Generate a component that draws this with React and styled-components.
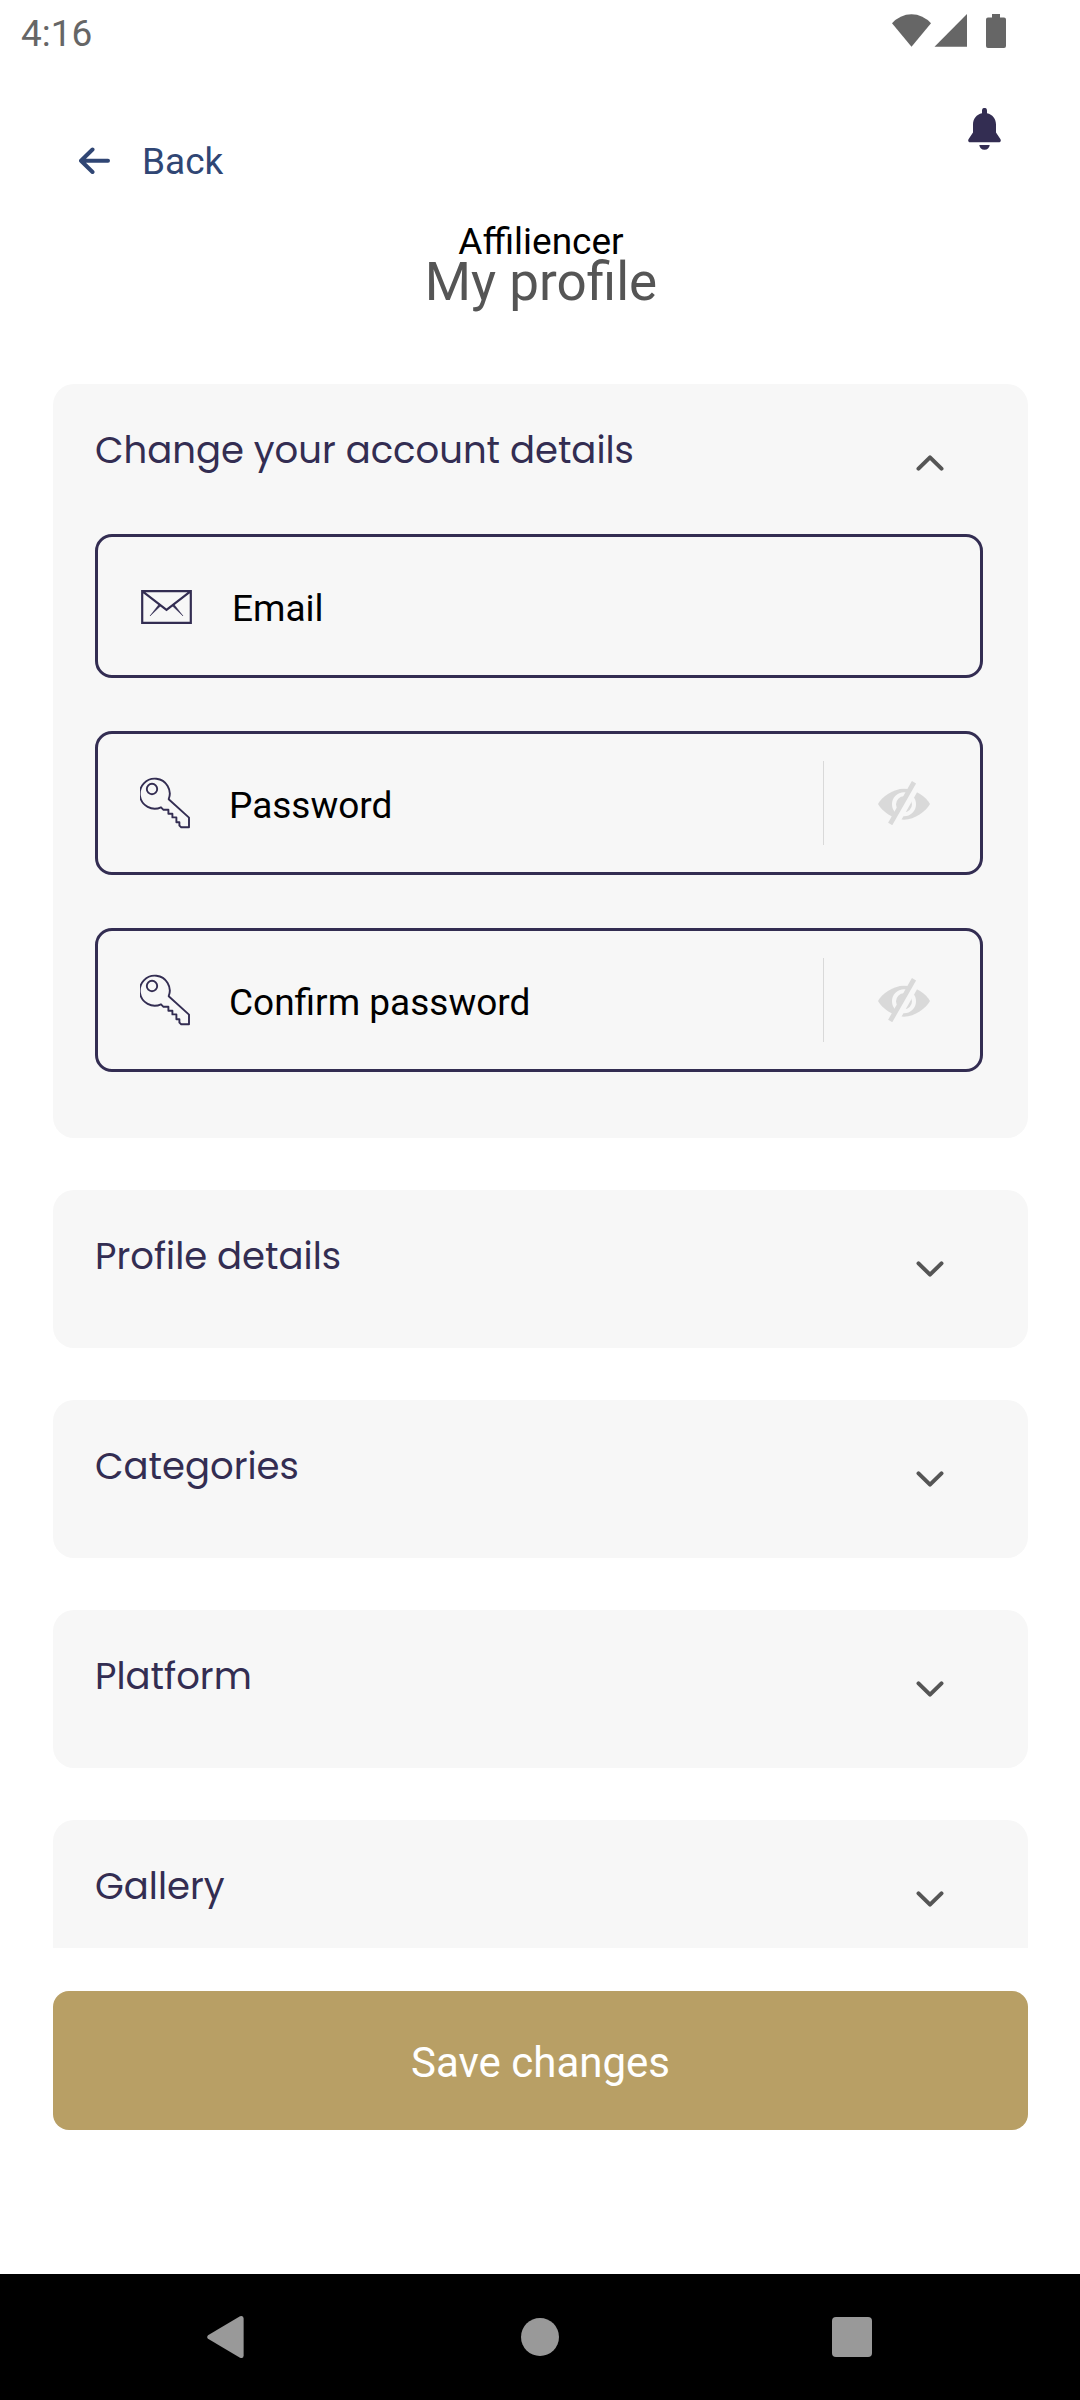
import { useState } from "react";
import styled, { createGlobalStyle } from "styled-components";

const sections = [
  { id: "account", title: "Change your account details" },
  { id: "profile", title: "Profile details" },
  { id: "categories", title: "Categories" },
  { id: "platform", title: "Platform" },
  { id: "gallery", title: "Gallery" },
];

const StatusIcons = () => (
  <svg width="114" height="44" viewBox="0 0 114 44" fill="#666666">
    <path d="M0 11.2A25.8 25.8 0 0 1 39 11.2L19.5 34.8Z" />
    <path d="M75 2V34.8H42.5Z" />
    <path d="M100 2h8v3.4h4a2 2 0 0 1 2 2V34a2 2 0 0 1-2 2H96a2 2 0 0 1-2-2V7.400a2 2 0 0 1 2-2h4Z" />
  </svg>
);

const ArrowIcon = () => (
  <svg width="31" height="30" viewBox="0 0 31 30" fill="none">
    <path
      d="M13.500 2.500L2 13.700L13.500 25M2.500 13.700H29"
      stroke="#304674"
      strokeWidth="4"
      strokeLinecap="round"
      strokeLinejoin="round"
    />
  </svg>
);

const BellIcon = () => (
  <svg width="33" height="42" viewBox="0 0 33 42" fill="#332d52">
    <path d="M14 5.200V2.400a2.500 2.500 0 0 1 5 0V5.200C24.500 6.400 28 10.800 28 16.500V24.500L32.500 31.200C33.300 32.800 32.500 34.300 30.800 34.300H2.200C.5 34.300-.3 32.800.5 31.200L5 24.500V16.500C5 10.800 8.500 6.400 14 5.200Z" />
    <path d="M11.300 37H21.700C21.300 39.900 19.400 41.800 16.500 41.800S11.700 39.900 11.300 37Z" />
  </svg>
);

const MailIcon = () => (
  <svg width="53" height="36" viewBox="0 -2 53 36" fill="none">
    <path
      d="M2.200 1.200H50.800V32.800H2.200ZM2.200 1.200L26.500 19.800L50.800 1.200"
      stroke="#332d52"
      strokeWidth="2.200"
    />
    <path
      d="M19.300 14L10 26L21 15.500ZM33.700 14L43 26L32 15.500Z"
      fill="#332d52"
      stroke="#332d52"
      strokeWidth=".5"
    />
  </svg>
);

const KeyIcon = () => (
  <svg width="50" height="52" viewBox="0 0 50 52" fill="none">
    <g stroke="#332d52" strokeWidth="1.900" strokeLinejoin="round">
      <path d="M21 30.300A15 15 0 1 1 28.700 22.200L49 40.600V50.300H41.200L39.400 48.600V45.200H36.400V40.400H32.400V36.700H28.400V32.800H23.500Z" />
      <circle cx="12" cy="12" r="5.200" />
    </g>
  </svg>
);

const EyeOffIcon = () => (
  <svg width="52" height="44" viewBox="0 0 52 44" fill="none">
    <path
      d="M0 23C4 16 15 7.800 26 7.800S48 16 52 23C48 30 37 38.700 26 38.700S4 30 0 23Z"
      fill="#d9d9d9"
    />
    <circle cx="26" cy="23.300" r="10" stroke="#f7f7f7" strokeWidth="4" />
    <path d="M42 0L17 44" stroke="#f7f7f7" strokeWidth="6" />
    <path d="M36 1.200L12.200 43" stroke="#d9d9d9" strokeWidth="4.800" />
  </svg>
);

const ChevronIcon = ({ up }) => (
  <svg width="28" height="16" viewBox="0 0 28 16" fill="none">
    <path
      d={up ? "M2.500 13.700L14 2.300L25.500 13.700" : "M2.500 2.300L14 13.700L25.500 2.300"}
      stroke="#555555"
      strokeWidth="4"
      strokeLinecap="round"
      strokeLinejoin="round"
    />
  </svg>
);

const PasswordField = ({ name, placeholder }) => {
  const [visible, setVisible] = useState(false);

  return (
    <Field>
      <KeyIcon />
      <Input
        type={visible ? "text" : "password"}
        name={name}
        placeholder={placeholder}
        aria-label={placeholder}
      />
      <Toggle
        type="button"
        aria-label="Show password"
        onClick={() => setVisible(!visible)}
      >
        <EyeOffIcon />
      </Toggle>
    </Field>
  );
};

const App = () => {
  const [open, setOpen] = useState("account");

  return (
    <>
      <GlobalStyle />
      <Screen>
        <StatusBar>
          <span>4:16</span>
          <StatusIcons />
        </StatusBar>
        <TopBar>
          <BackLink href="#">
            <ArrowIcon />
            Back
          </BackLink>
          <BellButton type="button" aria-label="Notifications">
            <BellIcon />
          </BellButton>
        </TopBar>
        <Heading>
          <Role>Affiliencer</Role>
          <Title>My profile</Title>
        </Heading>
        <Sections>
          {sections.map((section) => {
            const isOpen = open === section.id;
            return (
              <Card key={section.id}>
                <CardHeader
                  type="button"
                  aria-expanded={isOpen}
                  onClick={() => setOpen(isOpen ? "" : section.id)}
                >
                  <CardTitle>{section.title}</CardTitle>
                  <ChevronBox>
                    <ChevronIcon up={isOpen} />
                  </ChevronBox>
                </CardHeader>
                {isOpen && section.id === "account" && (
                  <Fields>
                    <Field>
                      <MailIcon />
                      <Input
                        type="email"
                        name="email"
                        placeholder="Email"
                        aria-label="Email"
                      />
                    </Field>
                    <PasswordField name="password" placeholder="Password" />
                    <PasswordField
                      name="confirm"
                      placeholder="Confirm password"
                    />
                  </Fields>
                )}
              </Card>
            );
          })}
        </Sections>
        <Footer>
          <SaveButton type="button">Save changes</SaveButton>
        </Footer>
        <NavBar>
          <NavButton type="button" aria-label="Back">
            <svg width="42" height="44" viewBox="0 0 42 44" fill="#999999">
              <path d="M1 20.200L33 1.200Q36.600 0 36.600 3.500V40.500Q36.600 44 33 42.800L1 23.800Q-.6 22 1 20.200Z" />
            </svg>
          </NavButton>
          <NavButton type="button" aria-label="Home">
            <svg width="40" height="40" viewBox="0 0 40 40" fill="#999999">
              <circle cx="20" cy="20" r="19" />
            </svg>
          </NavButton>
          <NavButton type="button" aria-label="Recent apps">
            <svg width="40" height="40" viewBox="0 0 40 40" fill="#999999">
              <rect width="40" height="40" rx="4" />
            </svg>
          </NavButton>
        </NavBar>
      </Screen>
    </>
  );
};

export default App;

const GlobalStyle = createGlobalStyle`
  * {
    box-sizing: border-box;
  }

  body {
    margin: 0;
    background: #ffffff;
    font-family: Roboto, sans-serif;
    font-size: 37px;
  }

  button,
  input {
    font: inherit;
    color: inherit;
    background: none;
    border: 0;
    padding: 0;
    margin: 0;
  }

  button {
    cursor: pointer;
  }

  svg {
    display: block;
    flex: none;
  }
`;

const Screen = styled.div`
  display: flex;
  flex-direction: column;
  height: 100vh;
`;

const StatusBar = styled.div`
  display: flex;
  align-items: center;
  justify-content: space-between;
  padding: 0 74px 0 21px;
  line-height: 68px;
  color: #666666;
`;

const TopBar = styled.header`
  display: flex;
  justify-content: space-between;
  min-height: 118px;
  padding: 40px 79px 0;
`;

const BackLink = styled.a`
  display: flex;
  align-items: center;
  align-self: flex-end;
  gap: 32px;
  line-height: 48px;
  color: #304674;
  text-decoration: none;
`;

const BellButton = styled.button`
  align-self: flex-start;
`;

const Heading = styled.div`
  padding: 36px 52px 82px 54px;
  text-align: center;
  line-height: 40px;
`;

const Role = styled.p`
  margin: 0;
  color: #000000;
`;

const Title = styled.h1`
  margin: 0;
  font-size: 53px;
  font-weight: 400;
  color: #555555;
`;

const Sections = styled.main`
  display: flex;
  flex-direction: column;
  flex: 1;
  gap: 52px;
  min-height: 0;
  padding: 0 52px 0 53px;
  overflow-y: auto;
  scrollbar-width: none;
`;

const Card = styled.section`
  flex: none;
  padding: 42px 45px 42px 42px;
  border-radius: 21px;
  background: #f7f7f7;
`;

const CardHeader = styled.button`
  display: flex;
  align-items: flex-start;
  justify-content: space-between;
  width: 100%;
  text-align: left;
`;

const CardTitle = styled.span`
  font-family: Poppins, Inter, sans-serif;
  font-size: 37px;
  line-height: 48px;
  color: #332d52;
`;

const ChevronBox = styled.span`
  display: flex;
  align-items: center;
  justify-content: center;
  width: 106px;
  height: 74px;
`;

const Fields = styled.div`
  display: flex;
  flex-direction: column;
  gap: 53px;
  padding: 34px 0 24px;
`;

const Field = styled.label`
  display: flex;
  align-items: center;
  gap: 39px;
  height: 144px;
  padding-left: 42px;
  border: 3px solid #332d52;
  border-radius: 17px;
`;

const Input = styled.input`
  flex: 1;
  min-width: 0;
  height: 84px;
  padding-top: 4px;
  outline: none;
  color: #000000;

  &::placeholder {
    color: #000000;
    opacity: 1;
  }
`;

const Toggle = styled.button`
  display: flex;
  align-items: center;
  justify-content: center;
  width: 157px;
  height: 84px;
  padding-left: 4px;
  border-left: 1px solid #d9d9d9;
`;

const Footer = styled.footer`
  padding: 43px 52px 144px 53px;
`;

const SaveButton = styled.button`
  width: 100%;
  padding: 48px 0 43px;
  border-radius: 16px;
  background: #b89f65;
  font-size: 42px;
  line-height: 48px;
  color: #ffffff;
`;

const NavBar = styled.nav`
  display: grid;
  grid-template-columns: repeat(3, 1fr);
  height: 126px;
  padding: 0 72px;
  background: #000000;
`;

const NavButton = styled.button`
  display: flex;
  align-items: center;
  justify-content: center;
`;
